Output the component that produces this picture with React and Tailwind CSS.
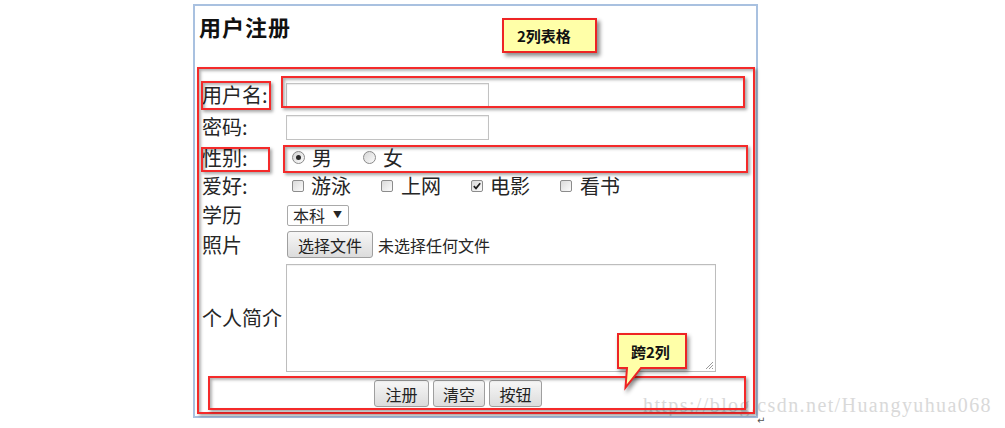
export default function App() {
  const cjk = "font-['Noto_Sans_CJK_SC','Noto_Sans',sans-serif]";
  const redBox =
    "absolute border-2 border-[#f42a2a] shadow-[2px_2px_3px_rgba(0,0,0,0.35),inset_2px_2px_3px_rgba(0,0,0,0.3)] pointer-events-none";

  const Radio = ({ checked }) => (
    <span className="relative inline-block w-[13px] h-[13px] rounded-full border border-[#8a8a8a] bg-gradient-to-br from-[#d6d6d6] to-[#fbfbfb] shrink-0">
      {checked && (
        <span className="absolute left-[3px] top-[3px] w-[5px] h-[5px] rounded-full bg-[#2b2b2b]" />
      )}
    </span>
  );

  const Check = ({ checked }) => (
    <span className="relative inline-block w-[12px] h-[12px] rounded-[2px] border border-[#8c8c8c] bg-gradient-to-br from-[#dadada] to-[#fbfbfb] shrink-0">
      {checked && (
        <svg className="absolute left-0 top-0" width="10" height="10" viewBox="0 0 10 10">
          <path d="M1.8 5.2 L4 7.4 L8.2 2.3" fill="none" stroke="#1e1e1e" strokeWidth="1.7" />
        </svg>
      )}
    </span>
  );

  const Btn = ({ children, w }) => (
    <span
      className={`inline-flex items-center justify-center h-[27px] rounded-[3px] border border-[#9f9f9f] bg-gradient-to-b from-[#f7f7f7] to-[#dcdcdc] text-[16px] leading-[20px] text-[#222] ${w}`}
    >
      {children}
    </span>
  );

  return (
    <div className={`relative w-[1005px] h-[428px] bg-white overflow-hidden pt-[4px] pl-[193px] ${cjk} text-[#262626]`}>
      {/* watermark */}
      <div className="absolute left-[643px] top-[395px] text-[20px] leading-[20px] font-['Liberation_Serif',serif] text-[#d9d9d9] tracking-[1.4px] whitespace-nowrap">
        https://blog.csdn.net/Huangyuhua068
      </div>
      <div className="absolute left-[757px] top-[416px] text-[10px] leading-[10px] text-[#555] font-['DejaVu_Sans',sans-serif]">↵</div>

      <div className="relative w-[565px] h-[414px] border-2 border-[#a9c1e0]">
        {/* title */}
        <div className="pt-[5px] pl-[4px] h-[35px] text-[22px] leading-[30px] font-bold tracking-[1px] text-[#111]">
          用户注册
        </div>

        {/* form */}
        <div className="mt-[38px] pl-[5px] text-[20px] leading-[28px]">
          <div className="flex items-center h-[32px]">
            <div className="w-[86px] pl-[2px]">用户名:</div>
            <input readOnly className="w-[203px] h-[25px] border border-[#c2c2c2] shadow-[inset_0_1px_1px_rgba(0,0,0,0.08)] bg-white outline-none" />
          </div>
          <div className="flex items-center h-[32px]">
            <div className="w-[86px] pl-[2px]">密码:</div>
            <input readOnly type="password" className="w-[203px] h-[25px] border border-[#c2c2c2] shadow-[inset_0_1px_1px_rgba(0,0,0,0.08)] bg-white outline-none" />
          </div>
          <div className="flex items-center h-[29px]">
            <div className="w-[86px] pl-[2px]">性别:</div>
            <div className="flex items-center pl-[6px]">
              <Radio checked />
              <span className="ml-[7px]">男</span>
              <span className="ml-[31px] flex"><Radio /></span>
              <span className="ml-[7px]">女</span>
            </div>
          </div>
          <div className="flex items-center h-[28px]">
            <div className="w-[86px] pl-[2px]">爱好:</div>
            <div className="flex items-center pl-[6px]">
              <Check />
              <span className="ml-[7px] w-[41px]">游泳</span>
              <span className="ml-[29px] flex"><Check /></span>
              <span className="ml-[8px] w-[41px]">上网</span>
              <span className="ml-[29px] flex"><Check checked /></span>
              <span className="ml-[7px] w-[41px]">电影</span>
              <span className="ml-[29px] flex"><Check /></span>
              <span className="ml-[8px]">看书</span>
            </div>
          </div>
          <div className="flex items-center h-[30px]">
            <div className="w-[86px] pl-[2px]">学历</div>
            <div className="ml-[1px] flex items-center w-[62px] h-[21px] border border-[#a9a9a9] rounded-[2px] bg-white pl-[5px] text-[16px] leading-[19px]">
              <span>本科</span>
              <span className="ml-[8px] text-[9px] leading-[10px]">▼</span>
            </div>
          </div>
          <div className="flex items-center h-[29px]">
            <div className="w-[86px] pl-[2px]">照片</div>
            <div className="ml-[1px] flex items-center">
              <Btn w="w-[86px] h-[26px]">选择文件</Btn>
              <span className="ml-[5px] text-[16px] leading-[20px]">未选择任何文件</span>
            </div>
          </div>
          <div className="flex items-center h-[117px]">
            <div className="w-[86px] pl-[2px]">个人简介</div>
            <div className="relative w-[430px] h-[108px] border border-[#bdbdbd] shadow-[inset_0_1px_1px_rgba(0,0,0,0.06)] bg-white">
              <svg className="absolute right-[1px] bottom-[1px]" width="9" height="9" viewBox="0 0 9 9">
                <path d="M8 1 L1 8 M8 4 L4 8 M8 7 L7 8" stroke="#9a9a9a" strokeWidth="1" fill="none" />
              </svg>
            </div>
          </div>
          <div className="flex items-center justify-center w-[515px] h-[35px] gap-[4px] pl-[1px]">
            <Btn w="w-[55px]">注册</Btn>
            <Btn w="w-[52px]">清空</Btn>
            <Btn w="w-[53px]">按钮</Btn>
          </div>
        </div>

        {/* annotation boxes */}
        <div className={`${redBox} left-[2px] top-[61px] w-[558px] h-[347px]`} />
        <div className={`${redBox} left-[6px] top-[75px] w-[70px] h-[29px]`} />
        <div className={`${redBox} left-[86px] top-[70px] w-[464px] h-[32px]`} />
        <div className={`${redBox} left-[6px] top-[141px] w-[69px] h-[25px]`} />
        <div className={`${redBox} left-[88px] top-[139px] w-[465px] h-[28px]`} />
        <div className={`${redBox} left-[13px] top-[370px] w-[538px] h-[34px]`} />

        {/* callout 1 */}
        <div className="absolute left-[307px] top-[12px] w-[95px] h-[35px] border-2 border-[#ee2424] bg-[#ffffa8] shadow-[3px_3px_4px_rgba(0,0,0,0.45)] flex items-center pl-[13px] text-[15px] leading-[20px] font-bold text-[#111]">
          2列表格
        </div>

        {/* callout 2 */}
        <div className="absolute left-[422px] top-[327px] w-[72px] h-[60px]">
          <svg className="absolute left-0 top-0 drop-shadow-[2px_3px_2px_rgba(0,0,0,0.45)]" width="72" height="60" viewBox="0 0 72 60">
            <path d="M1 1 H69 V35 H24 L8.5 54.5 L10 35 H1 Z" fill="#ffffa8" stroke="#ee2424" strokeWidth="2" strokeLinejoin="miter" />
          </svg>
          <span className="absolute left-[14px] top-[8px] text-[15px] leading-[22px] font-bold text-[#111] whitespace-nowrap">
            跨2列
          </span>
        </div>
      </div>
    </div>
  );
}
